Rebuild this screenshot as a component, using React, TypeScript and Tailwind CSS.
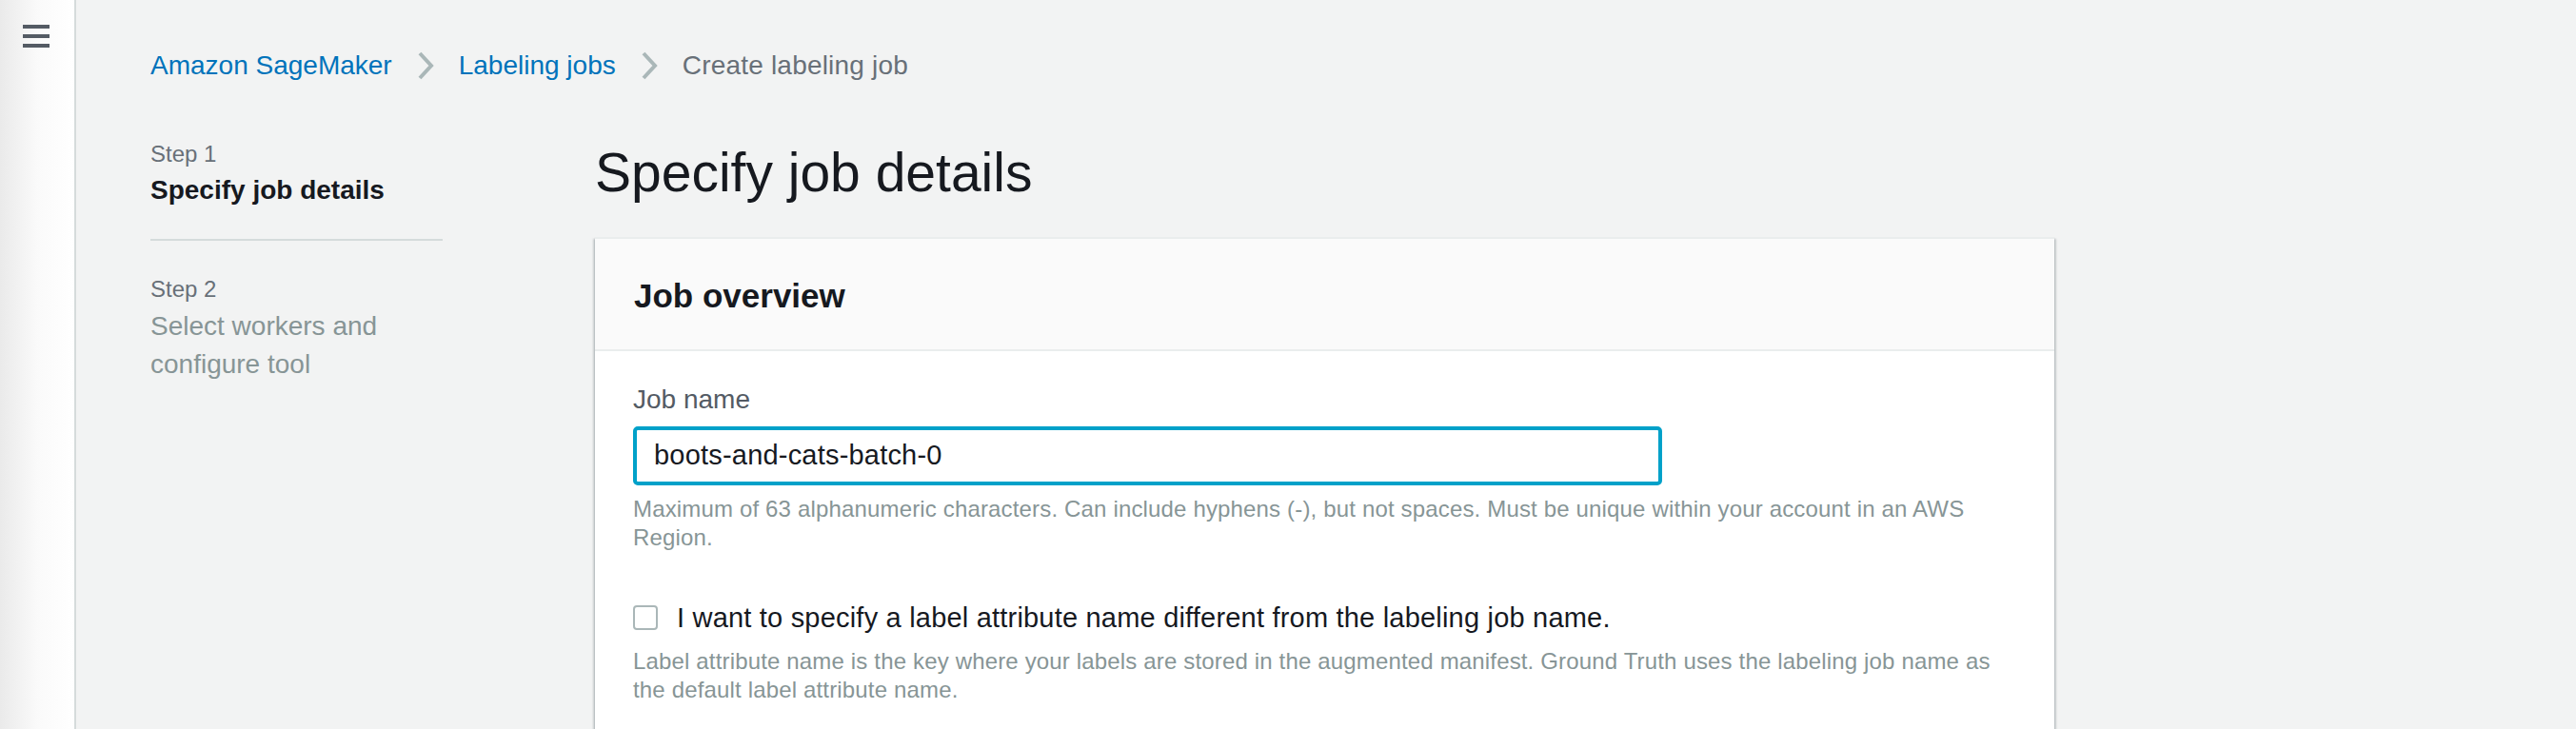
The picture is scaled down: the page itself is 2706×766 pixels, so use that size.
import React from 'react'

const font = "font-['Liberation_Sans',Arial,sans-serif]"

function Chevron() {
  return (
    <svg width="18" height="30" viewBox="0 0 18 30" className="shrink-0">
      <path d="M3 2 L15 15 L3 28" fill="none" stroke="#aab7b8" strokeWidth="4" />
    </svg>
  )
}

export default function App() {
  return (
    <div className={`${font} flex h-[766px] overflow-hidden bg-[#f2f3f3]`}>
      {/* side nav toggle */}
      <div className="w-[80px] shrink-0 border-r-2 border-[#d5dbdb] bg-gradient-to-r from-[#eaeaea] via-[#fafafa] to-white pl-[24px] pt-[26px]">
        <div className="flex w-[28px] flex-col gap-[6px]">
          <div className="h-[4px] bg-[#545b64]" />
          <div className="h-[4px] bg-[#545b64]" />
          <div className="h-[4px] bg-[#545b64]" />
        </div>
      </div>

      <div className="flex-1 pl-[78px] pt-[49px]">
        <nav className="flex items-center gap-[26px] text-[28px] leading-[40px]">
          <span className="text-[#0073bb]">Amazon SageMaker</span>
          <Chevron />
          <span className="text-[#0073bb]">Labeling jobs</span>
          <Chevron />
          <span className="tracking-[0.2px] text-[#687078]">Create labeling job</span>
        </nav>

        <div className="mt-[57px] flex gap-[160px]">
          <div className="w-[307px] shrink-0">
            <div className="text-[24px] leading-[32px] text-[#687078]">Step 1</div>
            <div className="mt-[2px] text-[28px] font-bold leading-[40px] text-[#16191f]">Specify job details</div>
            <div className="mt-[31px] h-[2px] bg-[#d5dbdb]" />
            <div className="mt-[35px] text-[24px] leading-[32px] text-[#687078]">Step 2</div>
            <div className="mt-[3px] text-[28px] leading-[40px] text-[#879596]">
              Select workers and
              <br />
              configure tool
            </div>
          </div>

          <div className="w-[1533px] shrink-0">
            <h1 className="mt-[3px] text-[57px] font-normal leading-[64px] text-[#16191f]">Specify job details</h1>

            <div className="mt-[36px] border-t-2 border-[#eaeded] bg-white shadow-[0_2px_2px_0_rgba(0,28,36,0.3),2px_2px_2px_0_rgba(0,28,36,0.15),-2px_2px_2px_0_rgba(0,28,36,0.15)]">
              <div className="border-b-2 border-[#eaeded] bg-[#fafafa] px-[41px] pb-[32px] pt-[36px]">
                <h2 className="text-[35px] font-bold leading-[48px] text-[#16191f]">Job overview</h2>
              </div>

              <div className="px-[40px] pb-[200px] pt-[31px]">
                <label className="block text-[28px] leading-[40px] text-[#545b64]">Job name</label>
                <div className="mt-[8px] flex h-[62px] w-[1081px] items-center rounded-[5px] border-4 border-[#00a1c9] px-[18px]">
                  <span className="text-[29px] tracking-[0.2px] text-[#16191f]">boots-and-cats-batch-0</span>
                </div>
                <p className="mt-[10px] text-[24px] leading-[30px] tracking-[0.16px] text-[#879596]">
                  Maximum of 63 alphanumeric characters. Can include hyphens (-), but not spaces. Must be unique within your account in an AWS Region.
                </p>

                <div className="mt-[49px] flex items-center gap-[20px]">
                  <div className="h-[26px] w-[26px] shrink-0 rounded-[4px] border-2 border-[#aab7b8] bg-white" />
                  <span className="text-[29px] leading-[40px] tracking-[0.2px] text-[#16191f]">
                    I want to specify a label attribute name different from the labeling job name.
                  </span>
                </div>
                <p className="mt-[11px] text-[24px] leading-[30px] tracking-[0.16px] text-[#879596]">
                  Label attribute name is the key where your labels are stored in the augmented manifest. Ground Truth uses the labeling job name as the default label attribute name.
                </p>
              </div>
            </div>
          </div>
        </div>
      </div>
    </div>
  )
}
